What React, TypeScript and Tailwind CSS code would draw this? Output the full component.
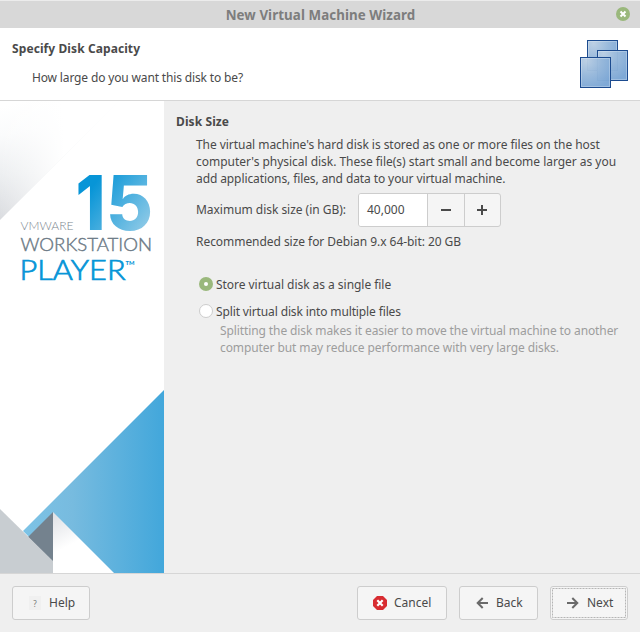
import type { ReactNode } from "react";

function Banner() {
  return (
    <svg width="164" height="472" viewBox="0 101 164 472" className="block shrink-0 bg-white">
      <defs>
        <linearGradient id="corner" gradientUnits="userSpaceOnUse" x1="8" y1="222" x2="-16" y2="110">
          <stop offset="0" stopColor="#d8dade" />
          <stop offset="0.4" stopColor="#eceef0" />
          <stop offset="0.75" stopColor="#fafbfc" />
          <stop offset="1" stopColor="#ffffff" />
        </linearGradient>
        <linearGradient id="cornerFade" gradientUnits="userSpaceOnUse" x1="0" y1="0" x2="64" y2="0">
          <stop offset="0" stopColor="#ffffff" stopOpacity="0" />
          <stop offset="1" stopColor="#ffffff" />
        </linearGradient>
        <linearGradient id="blue" gradientUnits="userSpaceOnUse" x1="23" y1="0" x2="164" y2="0">
          <stop offset="0" stopColor="#7dc3e6" />
          <stop offset="0.35" stopColor="#77bbdf" />
          <stop offset="1" stopColor="#42a7db" />
        </linearGradient>
        <linearGradient id="fold" gradientUnits="userSpaceOnUse" x1="56" y1="514" x2="72" y2="544">
          <stop offset="0" stopColor="#e0e2e6" />
          <stop offset="1" stopColor="#ffffff" />
        </linearGradient>
        <linearGradient id="digits" gradientUnits="userSpaceOnUse" x1="90" y1="190" x2="146" y2="232">
          <stop offset="0" stopColor="#0795d7" />
          <stop offset="1" stopColor="#92cbe7" />
        </linearGradient>
      </defs>
      <polygon points="0,101 119,101 0,220" fill="url(#corner)" />
      <polygon points="0,101 119,101 0,220" fill="url(#cornerFade)" />
      <polygon points="164,390 23,531 65,573 164,573" fill="url(#blue)" />
      <polygon points="53,512 114,573 53,573" fill="url(#fold)" />
      <polygon points="53,512 28,537 53,562" fill="#74828e" />
      <polygon points="0,509 53,561 53,573 0,573" fill="#c8cdd1" />
      <g fontFamily="Inter, sans-serif" fontWeight="800" fontSize="75.500" fill="url(#digits)">
        <text x="75.500" y="230" textLength="30" lengthAdjust="spacingAndGlyphs">1</text>
        <text x="106" y="230" textLength="47" lengthAdjust="spacingAndGlyphs">5</text>
      </g>
      <g fontFamily="Lato, sans-serif" fontWeight="300">
        <text x="20.500" y="230" fontSize="12" fill="#7b858e" textLength="53" lengthAdjust="spacingAndGlyphs">VMWARE</text>
        <text x="20.500" y="251" fontSize="17.500" fill="#6c7a86" stroke="#6c7a86" strokeWidth="0.400" textLength="131.500" lengthAdjust="spacingAndGlyphs">WORKSTATION</text>
        <text x="19.500" y="279.500" fontSize="27" fill="#0795d7" stroke="#0795d7" strokeWidth="0.700" textLength="106" lengthAdjust="spacingAndGlyphs">PLAYER</text>
        <text x="125.500" y="265" fontSize="6" fill="#0795d7" fontWeight="900" textLength="9" lengthAdjust="spacingAndGlyphs">TM</text>
      </g>
    </svg>
  );
}

function DisksIcon() {
  return (
    <svg width="48" height="48" viewBox="0 0 48 48" className="block">
      <defs>
        <radialGradient id="disk" cx="0.2" cy="0.1" r="1">
          <stop offset="0" stopColor="#c6d6e6" />
          <stop offset="0.5" stopColor="#94b6da" />
          <stop offset="1" stopColor="#6e9ed2" />
        </radialGradient>
      </defs>
      {[[7, 0], [17, 10], [0, 17]].map(([x, y]) => (
        <g key={x} fillOpacity="0.9">
          <rect x={x + 0.5} y={y + 0.5} width="30" height="30" fill="#9dbcdd" />
          <rect x={x + 0.5} y={y + 0.5} width="30" height="30" fill="url(#disk)" fillOpacity="0.7" stroke="#1c4b8f" />
          <rect x={x + 1.5} y={y + 1.5} width="28" height="28" fill="none" stroke="#ffffff" strokeOpacity="0.25" />
        </g>
      ))}
    </svg>
  );
}

function Button({ className, icon, children }: { className: string; icon: ReactNode; children: string }) {
  return (
    <button className={`flex h-[34px] items-center rounded-[3px] border border-[#cdcdcd] bg-[#f5f5f5] ${className}`}>
      {icon}
      <span className="pb-[2px]">{children}</span>
    </button>
  );
}

export default function App() {
  return (
    <div className="flex h-[632px] w-[640px] flex-col overflow-hidden bg-[#efefef] font-['Noto_Sans',sans-serif] text-[12px] leading-[17px] text-[#4a4a4a]">
      <header className="flex h-7 shrink-0 items-center border-t border-[#ececec] bg-[#d8d8d8] pr-[10px]">
        <h1 className="flex-1 pt-px pl-[25px] text-center text-[13.33px] font-bold tracking-[0.08px] text-[#7d7d7d]">New Virtual Machine Wizard</h1>
        <svg width="14" height="14" viewBox="0 0 14 14" className="-mt-px">
          <circle cx="7" cy="7" r="7" fill="#9ab87c" />
          <path d="M4.500 4.500l5 5M9.500 4.500l-5 5" stroke="#fff" strokeWidth="2" />
        </svg>
      </header>
      <section className="flex h-[73px] shrink-0 justify-between border-b border-[#d6d6d6] bg-white pt-3 pr-3 pl-3">
        <div>
          <h2 className="font-bold tracking-[0.09px]">Specify Disk Capacity</h2>
          <p className="pt-3 pl-5 tracking-[-0.15px]">How large do you want this disk to be?</p>
        </div>
        <DisksIcon />
      </section>
      <main className="flex h-[472px] shrink-0">
        <Banner />
        <div className="flex-1 pt-3 pl-3">
          <h2 className="font-bold tracking-[0.1px]">Disk Size</h2>
          <div className="pl-5">
            <p className="mt-[6px] whitespace-nowrap">
              <span className="tracking-[-0.05px]">The virtual machine's hard disk is stored as one or more files on the host</span><br />
              <span className="tracking-[-0.03px]">computer's physical disk. These file(s) start small and become larger as you</span><br />
              <span className="tracking-[-0.1px]">add applications, files, and data to your virtual machine.</span>
            </p>
            <div className="mt-[6px] flex h-[34px] items-center">
              <span className="w-[162px] pb-[2px] tracking-[-0.03px]">Maximum disk size (in GB):</span>
              <div className="flex h-[34px] w-[143px] overflow-hidden rounded-[3px] border border-[#cdcdcd] bg-[#f5f5f5]">
                <span className="flex w-[68px] items-center bg-white pb-[2px] pl-2">40,000</span>
                <span className="flex w-[37px] items-center justify-center border-l border-[#cdcdcd]">
                  <svg width="10" height="10"><path d="M0 5h10" stroke="#4a4a4a" strokeWidth="2" /></svg>
                </span>
                <span className="flex w-9 items-center justify-center border-l border-[#cdcdcd] pr-[2px]">
                  <svg width="10" height="10"><path d="M0 5h10M5 0v10" stroke="#4a4a4a" strokeWidth="2" /></svg>
                </span>
              </div>
            </div>
            <p className="mt-[6px] tracking-[-0.05px]">Recommended size for Debian 9.x 64-bit: 20 GB</p>
            <div className="mt-[26px] flex items-start gap-[3px] pl-[3px]">
              <span className="mt-px flex size-[14px] items-center justify-center rounded-full bg-[#9ab87c]">
                <span className="size-1 rounded-full bg-white" />
              </span>
              <span className="tracking-[-0.04px]">Store virtual disk as a single file</span>
            </div>
            <div className="mt-[10px] flex items-start gap-[3px] pl-[3px]">
              <span className="mt-px size-[14px] rounded-full border border-[#cdcdcd] bg-white" />
              <span className="tracking-[-0.13px]">Split virtual disk into multiple files</span>
            </div>
            <p className="mt-[2px] pl-6 whitespace-nowrap text-[#9d9d9d]">
              <span className="tracking-[-0.1px]">Splitting the disk makes it easier to move the virtual machine to another</span><br />
              <span className="tracking-[-0.09px]">computer but may reduce performance with very large disks.</span>
            </p>
          </div>
        </div>
      </main>
      <footer className="flex flex-1 border-t border-[#d6d6d6] px-3 pt-3">
        <Button className="w-[78px] pl-4" icon={<span className="mr-2 flex h-[14px] w-3 items-center justify-center bg-[#f0f0f0] text-[8px] text-[#777]">?</span>}>Help</Button>
        <div className="flex-1" />
        <Button className="mr-3 w-[90px] pl-[15px]" icon={
          <svg width="14" height="14" viewBox="0 0 14 14" className="mr-[7px]">
            <path d="M4 0h6l4 4v6l-4 4H4l-4-4V4z" fill="#d82c31" />
            <path d="M4.300 4.300l5.400 5.400M9.700 4.300L4.300 9.700" stroke="#fff" strokeWidth="2.200" />
          </svg>}>Cancel</Button>
        <Button className="mr-3 w-[79px] pl-4" icon={
          <svg width="12" height="12" viewBox="0 0 12 12" fill="none" stroke="#6a6a6a" strokeWidth="2" className="mr-2"><path d="M12 6H2M6.700 1L1.700 6l5 5" /></svg>}>Back</Button>
        <div className="relative h-[34px]">
          <Button className="w-[78px] pl-4" icon={
            <svg width="12" height="12" viewBox="0 0 12 12" fill="none" stroke="#6a6a6a" strokeWidth="2" className="mr-2"><path d="M0 6h10M5.300 1l5 5-5 5" /></svg>}>Next</Button>
          <svg width="74" height="30" className="pointer-events-none absolute top-[2px] left-[2px]">
            <rect x="0.500" y="0.500" width="73" height="29" fill="none" stroke="#b5b5b5" strokeDasharray="2 1" />
          </svg>
        </div>
      </footer>
    </div>
  );
}
